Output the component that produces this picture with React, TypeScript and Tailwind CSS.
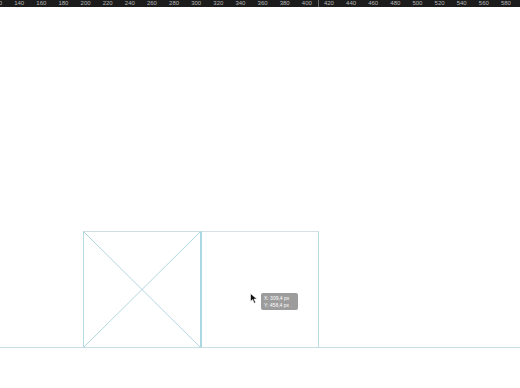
import React from "react";

const rulerLabels = [120, 140, 160, 180, 200, 220, 240, 260, 280, 300, 320, 340, 360, 380, 400, 420, 440, 460, 480, 500, 520, 540, 560, 580];

function Ruler() {
  return (
    <div className="relative h-[7px] w-full overflow-hidden bg-[#1c1c1c]">
      <div className="ml-[-14px] flex h-full items-center">
        {rulerLabels.map((label) => (
          <div
            key={label}
            className="w-[22.14px] shrink-0 text-center text-[6px] leading-[7px] text-[#b8b8b8]"
          >
            {label}
          </div>
        ))}
      </div>
      <div className="absolute left-[318px] top-0 h-full w-px bg-[#6a6a6a]" />
    </div>
  );
}

function Cursor() {
  return (
    <svg width="9" height="11" viewBox="0 0 9 11" className="block">
      <path d="M0.5 0.5 L0.5 8.5 L2.6 6.6 L4.2 10.2 L5.6 9.6 L4 6.1 L7 6.1 Z" fill="#111" stroke="#fff" strokeWidth="0.6" />
    </svg>
  );
}

export default function App() {
  return (
    <div
      className="h-[388px] w-[520px] overflow-hidden bg-white"
      style={{ fontFamily: '"Liberation Sans", Arial, sans-serif' }}
    >
      <Ruler />

      <div className="relative pt-[224px]">
        <div className="flex pl-[83px]">
          <div className="h-[116px] w-[119px] border-l border-t border-r-2 border-l-[#b3dce4] border-t-[#cfdde1] border-r-[#a9d8e2]">
            <svg width="100%" height="100%" viewBox="0 0 116 115" preserveAspectRatio="none" className="block">
              <line x1="0" y1="0" x2="116" y2="115" stroke="#b2d7df" strokeWidth="1" />
              <line x1="0" y1="115" x2="116" y2="0" stroke="#b2d7df" strokeWidth="1" />
            </svg>
          </div>
          <div className="h-[116px] w-[117px] border-r border-t border-r-[#b7dce4] border-t-[#d5e1e4]" />
        </div>

        <div className="h-px w-full bg-[#c7dfe4]" />

        <div className="absolute left-[250px] top-[286px]">
          <Cursor />
        </div>

        <div className="absolute left-[261px] top-[286px] flex h-[17px] w-[37px] flex-col justify-center rounded-[2px] bg-[#9c9c9c] px-[3px] text-[5px] leading-[7px] text-white">
          <span>X: 309,4 px</span>
          <span>Y: 458,4 px</span>
        </div>
      </div>
    </div>
  );
}
